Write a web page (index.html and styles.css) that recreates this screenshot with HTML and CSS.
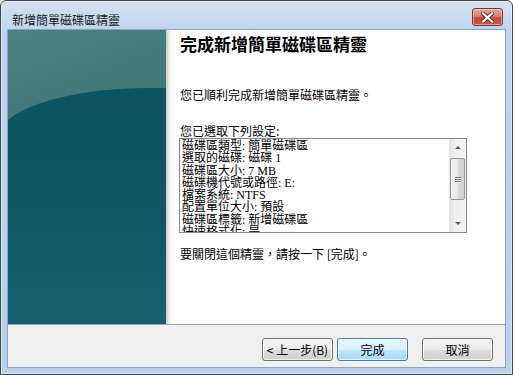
FILE: index.html
```html
<!DOCTYPE html>
<html>
<head>
  <title>新增簡單磁碟區精靈</title>
  <link rel="stylesheet" href="styles.css">
</head>
<body>
  <div class="window">
    <div class="titlebar">
      <span class="title">新增簡單磁碟區精靈</span>
      <button class="close" aria-label="關閉">
        <svg width="13" height="11" viewBox="0 0 13 11">
          <path d="M2 1.5 L11 9.5 M11 1.5 L2 9.5" stroke="#5a2a24" stroke-width="4" stroke-linecap="square"/>
          <path d="M2 1.5 L11 9.5 M11 1.5 L2 9.5" stroke="#ffffff" stroke-width="2.2" stroke-linecap="square"/>
        </svg>
      </button>
    </div>

    <div class="client">
      <div class="main">
        <div class="side"></div>
        <div class="content">
          <h1>完成新增簡單磁碟區精靈</h1>
          <p class="done">您已順利完成新增簡單磁碟區精靈。</p>
          <p class="label">您已選取下列設定:</p>
          <div class="listbox">
            <div class="lines">
              <div>磁碟區類型: 簡單磁碟區</div>
              <div>選取的磁碟: 磁碟 1</div>
              <div>磁碟區大小: 7 MB</div>
              <div>磁碟機代號或路徑: E:</div>
              <div>檔案系統: NTFS</div>
              <div>配置單位大小: 預設</div>
              <div>磁碟區標籤: 新增磁碟區</div>
              <div>快速格式化: 是</div>
            </div>
            <div class="scrollbar">
              <div class="arrow"><span class="tri up"></span></div>
              <div class="track">
                <div class="thumb"><span></span><span></span><span></span></div>
              </div>
              <div class="arrow"><span class="tri down"></span></div>
            </div>
          </div>
          <p class="hint">要關閉這個精靈，請按一下 [完成]。</p>
        </div>
      </div>
      <div class="footer">
        <button class="btn">&lt; 上一步(B)</button>
        <button class="btn default">完成</button>
        <button class="btn cancel">取消</button>
      </div>
    </div>
  </div>
</body>
</html>
```

FILE: styles.css
```css
body {
  margin: 0;
  padding: 0;
  background: #ffffff;
  font-family: "Noto Sans CJK TC", "Liberation Sans", sans-serif;
  font-size: 12px;
  color: #000;
}

.window {
  width: 513px;
  height: 375px;
  box-sizing: border-box;
  border: 1px solid #3d4654;
  border-radius: 6px 6px 0 0;
  background: linear-gradient(#d5e2f1 0%, #bed4ec 30px, #b9d1ea 100%);
  box-shadow: inset 0 0 0 1px rgba(255, 255, 255, 0.45);
  padding: 0 7px 7px 7px;
  display: flex;
  flex-direction: column;
}

.titlebar {
  height: 29px;
  display: flex;
  justify-content: space-between;
  padding: 0 2px 0 4px;
}

.title {
  margin-top: 12px;
  line-height: 14px;
  color: #1b1b1b;
}

.close {
  margin-top: 7px;
  width: 31px;
  height: 18px;
  padding: 0;
  border: 1px solid #7a3a33;
  border-radius: 3px;
  background: linear-gradient(#e6a89d 0%, #d87e70 45%, #c24a3a 55%, #c75a48 100%);
  box-shadow: inset 0 0 0 1px rgba(255, 220, 210, 0.5);
  display: flex;
  align-items: center;
  justify-content: center;
}

.client {
  flex: 1;
  display: flex;
  flex-direction: column;
  background: #f0f0f0;
  box-shadow: 0 0 0 1px #8aa4c2;
}

.main {
  height: 294px;
  display: flex;
}

.side {
  width: 158px;
  position: relative;
  overflow: hidden;
  background: linear-gradient(160deg, #4d8280 0%, #3a7373 45%, #2c6a6f 100%);
}

.side::before {
  content: '';
  position: absolute;
  left: -12px;
  top: 58px;
  width: 330px;
  bottom: 0;
  border-top-left-radius: 152px 52px;
  background: linear-gradient(#0b5460 0%, #0d5863 50%, #156170 100%);
}

.content {
  flex: 1;
  padding: 4px 0 0 14px;
  background: linear-gradient(90deg, #c9c9c9 0, #ececec 3px, #fbfbfb 6px, #fff 8px);
}

h1 {
  margin: 0;
  font-size: 17px;
  line-height: 20px;
  font-weight: bold;
}

p {
  margin: 0;
  line-height: 14px;
}

.done {
  margin-top: 34px;
}

.label {
  margin-top: 22px;
}

.listbox {
  width: 288px;
  height: 95px;
  box-sizing: border-box;
  border: 1px solid #828790;
  background: #fff;
  display: flex;
  margin-left: -1px;
}

.lines {
  flex: 1;
  overflow: hidden;
  padding: 1px 0 0 2px;
  font-family: "Liberation Serif", "Noto Sans CJK TC", serif;
  font-size: 12px;
  line-height: 12.3px;
  white-space: nowrap;
}

.scrollbar {
  width: 17px;
  display: flex;
  flex-direction: column;
  background: linear-gradient(90deg, #e3e3e3, #f1f1f1 40%, #f4f4f4);
}

.arrow {
  height: 17px;
  display: flex;
  align-items: center;
  justify-content: center;
}

.tri {
  width: 0;
  height: 0;
  border-left: 3px solid transparent;
  border-right: 3px solid transparent;
}

.tri.up {
  border-bottom: 3px solid #5c5c5c;
}

.tri.down {
  border-top: 3px solid #5c5c5c;
}

.track {
  flex: 1;
  padding-top: 2px;
}

.thumb {
  height: 42px;
  margin: 0 1px;
  box-sizing: border-box;
  border: 1px solid #979797;
  border-radius: 2px;
  background: linear-gradient(90deg, #f3f3f3, #e8e8e8 50%, #d8d8d8 51%, #d0d0d0);
  display: flex;
  flex-direction: column;
  align-items: center;
  justify-content: center;
  gap: 1px;
}

.thumb span {
  width: 6px;
  height: 1px;
  background: #707070;
  box-shadow: 0 1px 0 #fff;
}

.hint {
  margin-top: 14px;
}

.footer {
  flex: 1;
  border-top: 1px solid #a0a0a0;
  display: flex;
  justify-content: flex-end;
  align-items: flex-start;
  gap: 4px;
  padding: 13px 12px 0 0;
}

.btn {
  width: 71px;
  height: 23px;
  padding: 0;
  border: 1px solid #707070;
  border-radius: 3px;
  background: linear-gradient(#f2f2f2 0%, #ebebeb 50%, #dddddd 51%, #cfcfcf 100%);
  box-shadow: inset 0 0 0 1px rgba(255, 255, 255, 0.7);
  font-family: "Noto Sans CJK TC", "Liberation Sans", sans-serif;
  font-size: 12px;
  color: #000;
}

.btn.default {
  border-color: #3c7fb1;
  background: linear-gradient(#eaf6fd 0%, #d9f0fc 50%, #bee6fd 51%, #a7d9f5 100%);
}

.btn.cancel {
  margin-left: 10px;
}
```
